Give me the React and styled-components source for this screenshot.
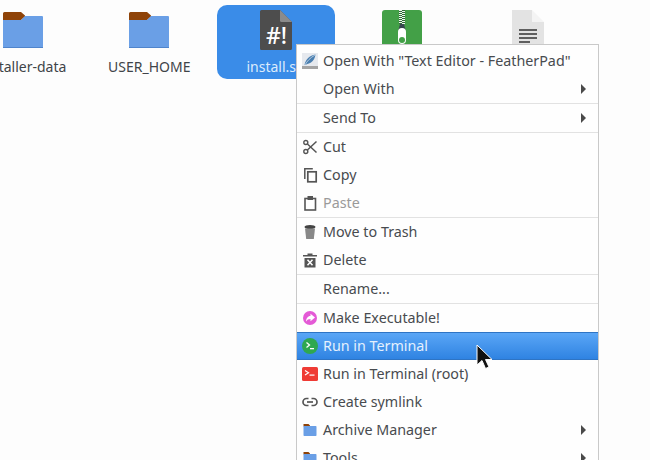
import styled, { createGlobalStyle } from "styled-components";

const GlobalStyle = createGlobalStyle`
  html, body {
    margin: 0;
    padding: 0;
    background: #fdfdfd;
  }
  body {
    font-family: "Noto Sans", "Open Sans", sans-serif;
    font-size: 14px;
  }
`;

const FolderIcon = ({ size = 40 }) => (
  <svg width={size} height={size * 0.9} viewBox="0 0 40 36">
    <path d="M0 1.500A1.500 1.500 0 0 1 1.500 0H18l4 3.500v1L18 8H0z" fill="#8f4308" />
    <path d="M0 8h18l4-4h17a1 1 0 0 1 1 1v29.500a1.500 1.500 0 0 1-1.500 1.500h-37A1.500 1.500 0 0 1 0 34.500z" fill="#6a9fe6" />
    <rect x="0" y="35" width="40" height="1" fill="#4f84cc" />
  </svg>
);

const ScriptIcon = () => (
  <svg width="32" height="40" viewBox="0 0 32 40">
    <path d="M1.500 0H20l12 12v26.500a1.500 1.500 0 0 1-1.500 1.500h-29A1.500 1.500 0 0 1 0 38.500v-37A1.500 1.500 0 0 1 1.500 0z" fill="#4d4d4d" />
    <path d="M20 0l12 12H21.500A1.500 1.500 0 0 1 20 10.500z" fill="#8b8b8b" />
    <text x="16.500" y="33.500" textAnchor="middle" fontFamily="'Noto Sans', sans-serif" fontWeight="500" fontSize="23" fill="#fff">#!</text>
  </svg>
);

const zipTeeth = [0, 2, 4, 6, 8, 10, 12];

const ZipIcon = () => (
  <svg width="40" height="40" viewBox="0 0 40 40">
    <rect width="40" height="40" rx="3" fill="#43a047" />
    <rect x="17" y="0" width="6" height="14" fill="#2e6b33" />
    {zipTeeth.map((y) => (
      <g key={y} fill="#eef7ef">
        <rect x="17" y={y} width="3" height="1" />
        <rect x="20" y={y + 1} width="3" height="1" />
      </g>
    ))}
    <path d="M18 14h4l1.500 6h-7z" fill="#37474f" />
    <rect x="16" y="18" width="8" height="16" rx="4" fill="#fff" />
    <circle cx="20" cy="30" r="3" fill="#43a047" />
  </svg>
);

const DocIcon = () => (
  <svg width="32" height="40" viewBox="0 0 32 40">
    <path d="M0 0h20v12h12v28H0z" fill="#e3e3e3" />
    <path d="M20 0l12 12H20z" fill="#f4f4f4" />
    <g fill="#5f5f5f">
      <rect x="7" y="19" width="18" height="2" />
      <rect x="7" y="23" width="18" height="2" />
      <rect x="7" y="27" width="18" height="2" />
      <rect x="7" y="31" width="11" height="2" />
    </g>
  </svg>
);

const Glyph = ({ children }) => (
  <svg width="16" height="16" viewBox="0 0 16 16" fill="none">{children}</svg>
);

const menuIcons = {
  feather: (
    <Glyph>
      <rect width="16" height="16" fill="#e6e9ee" />
      <path d="M2.500 12C3.500 6.500 7.500 2.500 13.500 1.500 13 5 11.500 8 9 9.500 7 10.700 5 11 3.500 12z" fill="#4a7fb0" />
      <path d="M3 12C5 8 8 5 13 2" stroke="#dfe9f3" strokeWidth=".7" />
      <rect y="13" width="16" height="3" fill="#a4a4a4" />
    </Glyph>
  ),
  cut: (
    <Glyph>
      <circle cx="3.800" cy="3.500" r="2" stroke="#555" strokeWidth="1.400" />
      <circle cx="3.800" cy="12.500" r="2" stroke="#555" strokeWidth="1.400" />
      <path d="M5.400 5 14.500 13.500M5.400 11 14.500 2.500" stroke="#555" strokeWidth="1.500" />
    </Glyph>
  ),
  copy: (
    <Glyph>
      <path d="M2.800 12V1.800h8" stroke="#555" strokeWidth="1.500" />
      <rect x="5.800" y="4.800" width="8.400" height="10" stroke="#555" strokeWidth="1.700" />
    </Glyph>
  ),
  paste: (
    <Glyph>
      <rect x="3" y="3.500" width="10.500" height="11.500" stroke="#555" strokeWidth="1.600" />
      <rect x="5.500" y="1" width="5.500" height="4" fill="#555" />
    </Glyph>
  ),
  trash: (
    <Glyph>
      <ellipse cx="8" cy="3" rx="5.500" ry="2" fill="#444" />
      <path d="M3 4.500h10L11.800 15H4.200z" fill="#888" />
    </Glyph>
  ),
  delete: (
    <Glyph>
      <path d="M5.500 1.500h5V3H15v1.500H1V3h4.500z" fill="#555" />
      <path d="M2.500 6h11v9.500h-11z" fill="#555" />
      <path d="M5.500 7.800l5 5.500M10.500 7.800l-5 5.500" stroke="#fff" strokeWidth="1.500" />
    </Glyph>
  ),
  exec: (
    <Glyph>
      <circle cx="8" cy="8" r="7" fill="#e45ad6" />
      <path d="M8.500 3.800 13 7.500l-4.500 3.700V9C6.500 9 5 9.800 4 11.500 4 8.500 5.800 6 8.500 6z" fill="#fff" />
    </Glyph>
  ),
  terminal: (
    <Glyph>
      <circle cx="8" cy="8" r="8" fill="#2fa84f" />
      <path d="M4.500 4.500 7.500 7l-3 2.500" stroke="#fff" strokeWidth="1.300" />
      <rect x="8" y="10" width="4" height="1.300" fill="#fff" />
    </Glyph>
  ),
  root: (
    <Glyph>
      <rect width="16" height="14" y="1" rx="1.500" fill="#ef3b35" />
      <path d="M3 4.500 6.500 6.800 3 9" stroke="#fff" strokeWidth="1.200" />
      <rect x="7.500" y="8.500" width="5" height="1.200" fill="#fff" />
    </Glyph>
  ),
  link: (
    <Glyph>
      <path d="M6.500 4.500H4.500a3.500 3.500 0 0 0 0 7h2M9.500 4.500h2a3.500 3.500 0 0 1 0 7h-2" stroke="#555" strokeWidth="1.700" />
      <path d="M5 8h6" stroke="#555" strokeWidth="1.700" />
    </Glyph>
  ),
  folder: (
    <Glyph>
      <path d="M1.500 2h5L8 3.500v1H1.500z" fill="#8f4308" />
      <rect x="1.500" y="4" width="13" height="10" rx=".7" fill="#6a9fe6" />
    </Glyph>
  ),
};

const menuSections = [
  [
    { label: 'Open With "Text Editor - FeatherPad"', icon: "feather" },
    { label: "Open With", more: true },
  ],
  [{ label: "Send To", more: true }],
  [
    { label: "Cut", icon: "cut" },
    { label: "Copy", icon: "copy" },
    { label: "Paste", icon: "paste", disabled: true },
  ],
  [
    { label: "Move to Trash", icon: "trash" },
    { label: "Delete", icon: "delete" },
  ],
  [{ label: "Rename..." }],
  [
    { label: "Make Executable!", icon: "exec" },
    { label: "Run in Terminal", icon: "terminal", active: true },
    { label: "Run in Terminal (root)", icon: "root" },
    { label: "Create symlink", icon: "link" },
    { label: "Archive Manager", icon: "folder", more: true },
    { label: "Tools", icon: "folder", more: true },
  ],
];

export default function App() {
  return (
    <Desktop>
      <GlobalStyle />
      <IconGrid>
        <FileItem>
          <IconSlot><FolderIcon /></IconSlot>
          <FileName>installer-data</FileName>
        </FileItem>
        <FileItem>
          <IconSlot><FolderIcon /></IconSlot>
          <FileName>USER_HOME</FileName>
        </FileItem>
        <FileItem $selected>
          <IconSlot><ScriptIcon /></IconSlot>
          <FileName $selected>install.sh</FileName>
        </FileItem>
        <FileItem>
          <IconSlot><ZipIcon /></IconSlot>
        </FileItem>
        <FileItem>
          <IconSlot><DocIcon /></IconSlot>
        </FileItem>
      </IconGrid>

      <ContextMenu>
        {menuSections.map((section, i) => (
          <Section key={i}>
            {section.map((item) => (
              <Row key={item.label} $active={item.active} $disabled={item.disabled}>
                <RowIcon>{item.icon && menuIcons[item.icon]}</RowIcon>
                <RowLabel>{item.label}</RowLabel>
                {item.more && <Arrow />}
              </Row>
            ))}
          </Section>
        ))}
      </ContextMenu>

      <Pointer viewBox="0 0 18 26" width="18" height="26">
        <path d="M1 1v20l5-4.500 3.500 8 3.500-1.500-3.500-7.500H16z" fill="#111" stroke="#fff" strokeWidth="1" />
      </Pointer>
    </Desktop>
  );
}

const Desktop = styled.div`
  position: relative;
  width: 650px;
  height: 460px;
  overflow: hidden;
  background: #fdfdfd;
`;

const IconGrid = styled.div`
  display: flex;
  gap: 8.3px;
  margin-left: -36px;
  padding-top: 5px;
`;

const FileItem = styled.div`
  flex: 0 0 118px;
  height: 74px;
  box-sizing: border-box;
  padding-top: 5px;
  border-radius: 10px;
  display: flex;
  flex-direction: column;
  align-items: center;
  background: ${(p) => (p.$selected ? "#3a8ce8" : "transparent")};
`;

const IconSlot = styled.div`
  height: 40px;
  display: flex;
  align-items: center;
  justify-content: center;
`;

const FileName = styled.div`
  margin-top: 7px;
  line-height: 20px;
  color: ${(p) => (p.$selected ? "#dcebfc" : "#3f4448")};
  white-space: nowrap;
`;

const ContextMenu = styled.div`
  position: absolute;
  top: 44px;
  left: 296px;
  width: 303px;
  box-sizing: border-box;
  padding-top: 2px;
  background: #fefefe;
  border: 1px solid #c9c9c9;
`;

const Section = styled.div`
  & + & {
    border-top: 1px solid #e2e2e2;
  }
`;

const Row = styled.div`
  height: 28px;
  box-sizing: border-box;
  padding: 0 12px 0 5px;
  display: flex;
  align-items: center;
  gap: 5px;
  color: ${(p) => (p.$active ? "#e4f0fd" : p.$disabled ? "#9a9a9a" : "#484b4f")};
  ${(p) =>
    p.$active &&
    `
    background: linear-gradient(#5aa6f6, #2f83e2);
    border-top: 1px solid #2e74c4;
    border-bottom: 1px solid #2e74c4;
  `}
`;

const RowIcon = styled.span`
  flex: 0 0 16px;
  width: 16px;
  height: 16px;
  display: flex;
`;

const RowLabel = styled.span`
  flex: 1;
  margin-top: -2px;
  font-size: 14.3px;
  white-space: nowrap;
`;

const Arrow = styled.span`
  width: 0;
  height: 0;
  border-style: solid;
  border-width: 5px 0 5px 5px;
  border-color: transparent transparent transparent #4a4a4a;
`;

const Pointer = styled.svg`
  position: absolute;
  top: 344px;
  left: 476px;
`;
